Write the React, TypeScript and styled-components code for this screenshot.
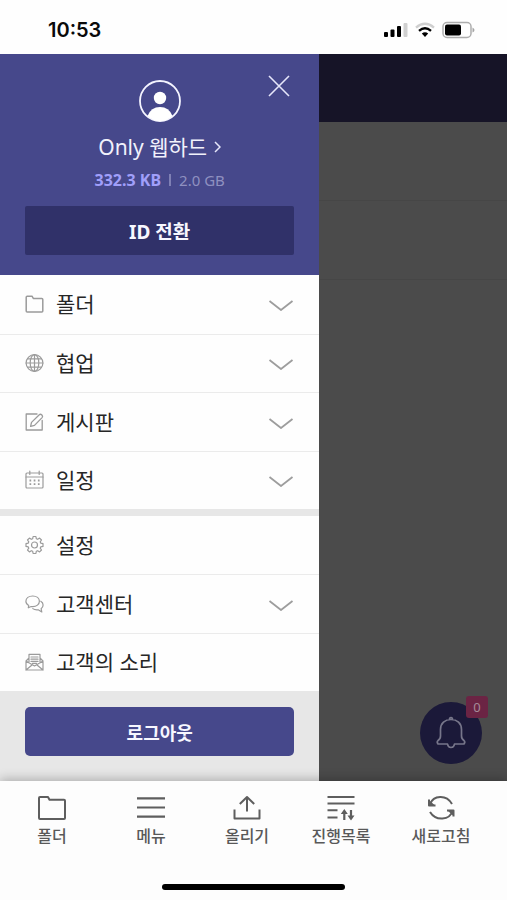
import React from "react";
import styled, { createGlobalStyle } from "styled-components";

const GlobalStyle = createGlobalStyle`
  *, *::before, *::after { box-sizing: border-box; }
  body {
    margin: 0;
    background: #fdfdfd;
    font-family: "Noto Sans", "Noto Sans CJK KR", sans-serif;
  }
  button { font: inherit; color: inherit; border: 0; padding: 0; background: none; cursor: pointer; }
  ul { list-style: none; margin: 0; padding: 0; }
  svg { display: block; flex: none; }
`;

const Screen = styled.div`
  display: flex;
  flex-direction: column;
  min-height: 100vh;
`;

const StatusBar = styled.header`
  display: flex;
  align-items: center;
  justify-content: space-between;
  height: 54px;
  padding: 6px 32px 0 48px;
  background: #fefefe;
`;

const Clock = styled.time`
  font: 600 20px/24px Inter, sans-serif;
  color: #0a0a0a;
`;

const StatusIcons = styled.div`
  display: flex;
  align-items: center;
  gap: 7px;
`;

const Body = styled.div`
  display: flex;
  flex: 1;
`;

const Drawer = styled.aside`
  display: flex;
  flex-direction: column;
  width: 63%;
  background: #e7e7e7;
`;

const Profile = styled.section`
  position: relative;
  display: flex;
  flex-direction: column;
  align-items: center;
  padding: 26px 25px 20px;
  background: #46488b;
  color: #f1f1fb;
`;

const CloseButton = styled.button`
  position: absolute;
  top: 20px;
  right: 28px;
`;

const UserName = styled.button`
  display: flex;
  align-items: center;
  gap: 7px;
  margin-top: 10px;
  font-size: 21px;
  line-height: 30px;
`;

const Usage = styled.p`
  display: flex;
  align-items: center;
  gap: 8px;
  margin: 8px 0 16px;
  font-size: 15px;
  line-height: 20px;
  color: #8f90c0;
`;

const Used = styled.strong`
  font-size: 16px;
  font-weight: 700;
  color: #a09ffa;
`;

const Divider = styled.span`
  width: 2px;
  height: 12px;
  background: #7f80b4;
`;

const WideButton = styled.button<{ $tone: "dark" | "brand" }>`
  width: 100%;
  height: 49px;
  border-radius: ${(p) => (p.$tone === "dark" ? 2 : 5)}px;
  background: ${(p) => (p.$tone === "dark" ? "#303169" : "#46488b")};
  color: #f7f7ff;
  font-size: ${(p) => (p.$tone === "dark" ? 19 : 18)}px;
  font-weight: 700;
`;

const Menu = styled.ul<{ $height: number }>`
  display: grid;
  grid-auto-rows: 1fr;
  min-height: ${(p) => p.$height}px;
  background: #fefefe;

  & + & { margin-top: 7px; }
`;

const MenuItem = styled.li`
  display: flex;

  & + & { border-top: 1px solid #ebebeb; }
`;

const MenuButton = styled.button`
  display: flex;
  flex: 1;
  align-items: center;
  gap: 11px;
  padding: 0 25px;
  color: #262626;
  font-size: 21px;
  line-height: 28px;
  text-align: left;
`;

const MenuLabel = styled.span`
  flex: 1;
`;

const DrawerFooter = styled.div`
  flex: 1;
  padding: 16px 25px 24px;
`;

const DimmedPage = styled.main`
  position: relative;
  flex: 1;
  background: #4b4b4b;
`;

const DimmedBar = styled.div`
  height: 68px;
  background: #161427;
`;

const DimmedRow = styled.div`
  height: 79px;
  border-bottom: 1px solid #464646;
`;

const AlertButton = styled.button`
  position: absolute;
  right: 25px;
  bottom: 17px;
  display: grid;
  place-items: center;
  width: 62px;
  height: 62px;
  border-radius: 50%;
  background: #1b1939;
`;

const Badge = styled.span`
  position: absolute;
  top: -6px;
  right: -6px;
  width: 22px;
  height: 22px;
  border-radius: 3px;
  background: #6b2444;
  color: #a58b98;
  font-size: 13px;
  line-height: 22px;
  text-align: center;
`;

const BottomBar = styled.footer`
  position: relative;
  display: flex;
  flex-direction: column;
  align-items: center;
  justify-content: space-between;
  height: 119px;
  padding-bottom: 10px;
  background: #fdfdfd;
  box-shadow: 0 -2px 10px rgba(0, 0, 0, 0.25);
`;

const Tabs = styled.nav`
  display: grid;
  grid-template-columns: 100fr 98fr 94fr 94fr 106fr;
  width: 100%;
  padding: 12px 13px 0 2px;
`;

const Tab = styled.button`
  display: flex;
  flex-direction: column;
  align-items: center;
  gap: 4px;
  color: #595959;
  font-size: 16px;
  font-weight: 500;
  line-height: 22px;
`;

const HomeIndicator = styled.div`
  width: 36%;
  height: 6px;
  border-radius: 3px;
  background: #000;
`;

const Icon = ({ size = 20, width = 1.3, color = "#9b9b9b", children }: {
  size?: number; width?: number; color?: string; children: React.ReactNode;
}) => (
  <svg width={size} height={size} viewBox={`0 0 ${size} ${size}`} fill="none" stroke={color}
    strokeWidth={width} strokeLinejoin="round" strokeLinecap="round" aria-hidden="true">
    {children}
  </svg>
);

const FolderIcon = () => (
  <Icon width={1.5}>
    <path d="M1.2 17V3.2Q1.2 2.2 2.2 2.2H7L8.3 4.4H16.8Q17.8 4.4 17.8 5.4V17Q17.8 18 16.8 18H2.2Q1.2 18 1.2 17Z" />
  </Icon>
);

const GlobeIcon = () => (
  <Icon width={1.2}>
    <circle cx="9.5" cy="10" r="8.4" />
    <ellipse cx="9.5" cy="10" rx="4.3" ry="8.4" />
    <path d="M9.5 1.6V18.4M1.1 10H17.9M2.5 5.8H16.5M2.5 14.2H16.5" />
  </Icon>
);

const WriteIcon = () => (
  <Icon>
    <path d="M12 2H1.2V18H17.2V8.5" />
    <path d="M5.6 14.4L6.5 10.4L14.3 2.7Q15.5 1.7 16.9 3Q18.2 4.4 17.1 5.6L9.5 13.4Z" />
  </Icon>
);

const CalendarIcon = () => (
  <Icon width={1.2}>
    <rect x="1" y="3" width="17" height="15" rx="1" />
    <path d="M1 7H18M4.8 1V4.5M14.2 1V4.5" />
    <path d="M4.5 10.5H6.2M8.7 10.5H10.4M12.9 10.5H14.6M4.5 14.2H6.2M8.7 14.2H10.4M12.9 14.2H14.6" strokeWidth="1.8" strokeLinecap="butt" />
  </Icon>
);

const GearIcon = () => (
  <Icon width={1.2}>
    <path d="M8.1 1.5H10.9L11.3 3.7L12.7 4.3L14.6 3.1L16.5 5L15.2 6.8L15.8 8.2L18 8.6V11.4L15.8 11.8L15.2 13.2L16.5 15L14.6 16.9L12.7 15.7L11.3 16.3L10.9 18.5H8.1L7.7 16.3L6.3 15.7L4.4 16.9L2.5 15L3.8 13.2L3.2 11.8L1 11.4V8.6L3.2 8.2L3.8 6.8L2.5 5L4.4 3.1L6.3 4.3L7.7 3.7Z" />
    <circle cx="9.5" cy="10" r="3" />
  </Icon>
);

const ChatIcon = () => (
  <Icon width={1.2}>
    <path d="M3.3 13.8L3.7 11.6Q.9 10 .9 7.3C.9 4.2 3.8 2 7.7 2S14.4 4.2 14.4 7.3S11.5 12.6 7.7 12.6L6.2 12.5Z" />
    <path d="M15.8 7.2Q18.1 8.5 18.1 11Q18.1 13.3 16.1 14.7L16.8 18L13.2 15.8Q9.8 16.2 7.8 14.6" />
  </Icon>
);

const MailIcon = () => (
  <Icon width={1.2}>
    <path d="M4 6L1 9V18H18V9L15 6M4 11V2.3H15V11M1 9L9.5 14L18 9M1 18L7.3 12.8M18 18L11.7 12.8" />
    <path d="M6 5H13M6 7.2H13M6 9.4H13M7.5 11.4H11.5" />
  </Icon>
);

const ChevronDown = () => (
  <svg width="26" height="14" viewBox="0 0 26 14" fill="none" stroke="#9d9d9d" strokeWidth="1.8" aria-hidden="true">
    <path d="M1.5 4L13 13L24.5 4" />
  </svg>
);

const services = [
  { label: "폴더", icon: <FolderIcon />, expandable: true },
  { label: "협업", icon: <GlobeIcon />, expandable: true },
  { label: "게시판", icon: <WriteIcon />, expandable: true },
  { label: "일정", icon: <CalendarIcon />, expandable: true },
];

const support = [
  { label: "설정", icon: <GearIcon />, expandable: false },
  { label: "고객센터", icon: <ChatIcon />, expandable: true },
  { label: "고객의 소리", icon: <MailIcon />, expandable: false },
];

const TabIcon = ({ children }: { children: React.ReactNode }) => (
  <svg width="30" height="28" viewBox="0 0 30 28" fill="none" stroke="#5e5e5e" strokeWidth="2"
    strokeLinejoin="round" aria-hidden="true">
    {children}
  </svg>
);

const tabs = [
  { label: "폴더", icon: <path d="M2 25V5Q2 4 3 4H11L12.5 6.8H27Q28 6.8 28 7.8V25Q28 26 27 26H3Q2 26 2 25Z" /> },
  { label: "메뉴", icon: <path d="M1 5.3H29M1 14.5H29M1 23.7H29" strokeWidth="2.2" /> },
  { label: "올리기", icon: <path d="M2.5 16.5V25.5H27.5V16.5M15 18.5V4M7.8 11L15 4L22.2 11" /> },
  {
    label: "진행목록",
    icon: (
      <>
        <path d="M1.5 4H28.5M1.5 10.5H28.5M1.5 17.3H11.5M1.5 24.5H11.5" />
        <path d="M18.3 27V18M25 17V26" strokeWidth="2.2" />
        <path d="M14.8 21L18.3 16L21.8 21ZM21.5 22.5L25 27.5L28.5 22.5Z" fill="#5e5e5e" stroke="none" />
      </>
    ),
  },
  {
    label: "새로고침",
    icon: (
      <>
        <path d="M4 11C7.5 2.5 20 1 26 11M27 17.5C23.5 27.5 10 28.5 4 19" />
        <path d="M3 6.5V12.5H9.5M21 17.5H27.5V23.5" />
        <path d="M3 7L9 12.5H3ZM27.5 23L21.5 17.5H27.5Z" fill="#5e5e5e" stroke="none" />
      </>
    ),
  },
];

const MenuGroup = ({ items, height }: { items: typeof services; height: number }) => (
  <Menu $height={height}>
    {items.map(({ label, icon, expandable }) => (
      <MenuItem key={label}>
        <MenuButton type="button" aria-expanded={expandable ? false : undefined}>
          {icon}
          <MenuLabel>{label}</MenuLabel>
          {expandable && <ChevronDown />}
        </MenuButton>
      </MenuItem>
    ))}
  </Menu>
);

export default function App() {
  return (
    <Screen>
      <GlobalStyle />
      <StatusBar>
        <Clock>10:53</Clock>
        <StatusIcons>
          <svg width="24" height="16" viewBox="0 0 24 16" aria-hidden="true">
            <rect x="0" y="10" width="4" height="5" rx="1" />
            <rect x="6.5" y="7.5" width="4" height="7.5" rx="1" />
            <rect x="13" y="4" width="4" height="11" rx="1" />
            <rect x="19.5" y="1" width="4" height="14" rx="1" fill="#d0d0d0" />
          </svg>
          <svg width="20" height="16" viewBox="0 0 20 16" fill="none" strokeWidth="2.4" aria-hidden="true">
            <path d="M1 5.6Q10-2 19 5.6" stroke="#cfcfcf" />
            <path d="M4 8.8Q10 3.8 16 8.8" stroke="#000" />
            <path d="M6.8 11.4Q10 9 13.2 11.4L10 15Z" fill="#000" />
          </svg>
          <svg width="33" height="18" viewBox="0 0 33 18" aria-hidden="true">
            <rect x="1" y="1.5" width="28" height="15" rx="4" fill="none" stroke="#adadad" strokeWidth="1.5" />
            <rect x="3" y="3.5" width="16" height="11" rx="2" />
            <path d="M30.5 6.5Q32.5 7.5 32.5 9T30.5 11.5Z" fill="#a5a5a5" />
          </svg>
        </StatusIcons>
      </StatusBar>

      <Body>
        <Drawer>
          <Profile>
            <CloseButton type="button" aria-label="닫기">
              <svg width="24" height="24" viewBox="0 0 24 24" stroke="#e6e6fa" strokeWidth="1.6">
                <path d="M2 2L22 22M22 2L2 22" />
              </svg>
            </CloseButton>
            <svg width="42" height="42" viewBox="0 0 42 42" aria-hidden="true">
              <circle cx="21" cy="21" r="20" fill="none" stroke="#f4f4ff" strokeWidth="1.8" />
              <circle cx="21" cy="18" r="6.2" fill="#fff" />
              <path d="M8.5 36Q12 27 21 27T33.5 36Q28 41 21 41T8.5 36Z" fill="#fff" />
            </svg>
            <UserName type="button">
              Only 웹하드
              <svg width="7" height="12" viewBox="0 0 7 12" fill="none" stroke="#e6e6fa" strokeWidth="1.5" aria-hidden="true">
                <path d="M1 1L6 6L1 11" />
              </svg>
            </UserName>
            <Usage>
              <Used>332.3 KB</Used>
              <Divider />
              <span>2.0 GB</span>
            </Usage>
            <WideButton type="button" $tone="dark">ID 전환</WideButton>
          </Profile>
          <MenuGroup items={services} height={234} />
          <MenuGroup items={support} height={175} />
          <DrawerFooter>
            <WideButton type="button" $tone="brand">로그아웃</WideButton>
          </DrawerFooter>
        </Drawer>

        <DimmedPage>
          <DimmedBar />
          <DimmedRow />
          <DimmedRow />
          <AlertButton type="button" aria-label="알림">
            <svg width="32" height="34" viewBox="0 0 32 34" fill="none" stroke="#77768a" strokeWidth="1.7" strokeLinejoin="round" aria-hidden="true">
              <path d="M14.5 3.5Q14.5 1.5 16 1.5T17.5 3.5M12.5 28H3Q1.5 26 3 24.5Q5.5 23 5.5 20V13.5C5.5 7 10 3.5 16 3.5S26.5 7 26.5 13.5V20Q26.5 23 29 24.5Q30.5 26 29 28H19.5Q19 31.5 16 31.5T12.5 28Z" />
            </svg>
            <Badge>0</Badge>
          </AlertButton>
        </DimmedPage>
      </Body>

      <BottomBar>
        <Tabs>
          {tabs.map(({ label, icon }) => (
            <Tab key={label} type="button">
              <TabIcon>{icon}</TabIcon>
              {label}
            </Tab>
          ))}
        </Tabs>
        <HomeIndicator />
      </BottomBar>
    </Screen>
  );
}
